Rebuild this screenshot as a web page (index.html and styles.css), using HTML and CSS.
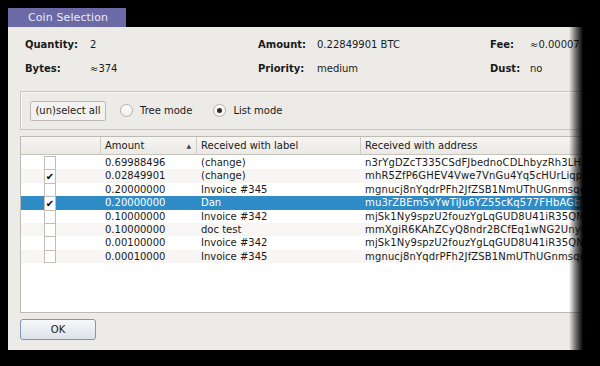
FILE: index.html
```html
<!DOCTYPE html>
<html>
<head>
<meta charset="utf-8">
<link rel="stylesheet" href="styles.css">
</head>
<body>
<div class="screen">
  <div class="tab">Coin Selection</div>
  <div class="dialog">
    <div class="info">
      <div class="info-col c1">
        <div class="row"><span class="lbl">Quantity:</span><span class="val">2</span></div>
        <div class="row"><span class="lbl">Bytes:</span><span class="val">≈374</span></div>
      </div>
      <div class="info-col c2">
        <div class="row"><span class="lbl">Amount:</span><span class="val">0.22849901 BTC</span></div>
        <div class="row"><span class="lbl">Priority:</span><span class="val">medium</span></div>
      </div>
      <div class="info-col c3">
        <div class="row"><span class="lbl">Fee:</span><span class="val">≈0.00007</span></div>
        <div class="row"><span class="lbl">Dust:</span><span class="val">no</span></div>
      </div>
    </div>
    <div class="group">
      <button class="btn-flat">(un)select all</button>
      <label class="radio"><span class="circle"></span>Tree mode</label>
      <label class="radio"><span class="circle on"><span class="dot"></span></span>List mode</label>
    </div>
    <div class="table">
      <div class="thead">
        <div class="th c-check"></div>
        <div class="th c-amount">Amount<span class="arrow">▲</span></div>
        <div class="th c-label">Received with label</div>
        <div class="th c-addr">Received with address</div>
      </div>
      <div class="tbody">
        <div class="tr"><div class="td c-check"><span class="cb"></span></div><div class="td c-amount">0.69988496</div><div class="td c-label">(change)</div><div class="td c-addr">n3rYgDZcT335CSdFJbednoCDLhbyzRh3LHx</div></div>
        <div class="tr alt"><div class="td c-check"><span class="cb">✔</span></div><div class="td c-amount">0.02849901</div><div class="td c-label">(change)</div><div class="td c-addr">mhR5ZfP6GHEV4Vwe7VnGu4Yq5cHUrLiqpQ</div></div>
        <div class="tr"><div class="td c-check"><span class="cb"></span></div><div class="td c-amount">0.20000000</div><div class="td c-label">Invoice #345</div><div class="td c-addr">mgnucj8nYqdrPFh2JfZSB1NmUThUGnmsqe</div></div>
        <div class="tr sel"><div class="td c-check"><span class="cb">✔</span></div><div class="td c-amount">0.20000000</div><div class="td c-label">Dan</div><div class="td c-addr">mu3rZBEm5vYwTiJu6YZ55cKq577FHbAGbz</div></div>
        <div class="tr"><div class="td c-check"><span class="cb"></span></div><div class="td c-amount">0.10000000</div><div class="td c-label">Invoice #342</div><div class="td c-addr">mjSk1Ny9spzU2fouzYgLqGUD8U41iR35QN</div></div>
        <div class="tr alt"><div class="td c-check"><span class="cb"></span></div><div class="td c-amount">0.10000000</div><div class="td c-label">doc test</div><div class="td c-addr">mmXgiR6KAhZCyQ8ndr2BCfEq1wNG2UnyG6</div></div>
        <div class="tr"><div class="td c-check"><span class="cb"></span></div><div class="td c-amount">0.00100000</div><div class="td c-label">Invoice #342</div><div class="td c-addr">mjSk1Ny9spzU2fouzYgLqGUD8U41iR35QN</div></div>
        <div class="tr alt"><div class="td c-check"><span class="cb"></span></div><div class="td c-amount">0.00010000</div><div class="td c-label">Invoice #345</div><div class="td c-addr">mgnucj8nYqdrPFh2JfZSB1NmUThUGnmsqe</div></div>
      </div>
    </div>
    <div class="footer">
      <button class="btn-ok">OK</button>
    </div>
  </div>
  <div class="shadow"></div>
</div>
</body>
</html>
```
FILE: styles.css
```css
* { box-sizing: border-box; }
html, body {
  margin: 0;
  padding: 0;
  background: #000;
}
body {
  width: 600px;
  height: 366px;
  overflow: hidden;
  font-family: "DejaVu Sans", "Liberation Sans", sans-serif;
  font-size: 10px;
  color: #1a1a1a;
}
.screen {
  position: relative;
  width: 600px;
  height: 366px;
  padding: 8px 0 0 8px;
}
.tab {
  width: 118px;
  height: 19px;
  background: #6b6aa6;
  color: #eceaf6;
  font-size: 11px;
  line-height: 19px;
  padding-left: 20px;
  letter-spacing: 0.1px;
}
.dialog {
  width: 620px;
  height: 323px;
  background: #edebe7;
  padding: 0 0 0 12px;
  display: flex;
  flex-direction: column;
}
.info {
  display: flex;
  height: 58px;
  padding-top: 11px;
}
.info-col .row {
  height: 24px;
  line-height: 14px;
  display: flex;
}
.info .lbl { font-weight: bold; }
.c1 { width: 238px; padding-left: 5px; }
.c1 .lbl { width: 65px; }
.c2 { width: 232px; }
.c2 .lbl { width: 59px; }
.c3 .lbl { width: 40px; }
.group {
  height: 39px;
  margin-top: 6px;
  border: 1px solid #c9c6c0;
  border-right: none;
  display: flex;
  align-items: center;
  padding-left: 9px;
  box-shadow: inset 1px 1px 0 #f8f7f5;
}
.btn-flat {
  font-family: inherit;
  font-size: 10px;
  height: 20px;
  width: 76px;
  padding: 0;
  color: #1a1a1a;
  background: #f3f2f0;
  border: 1px solid #bcb9b3;
  border-radius: 2px;
  margin-right: 14px;
}
.radio {
  display: flex;
  align-items: center;
  margin-right: 21px;
}
.circle {
  width: 13px;
  height: 13px;
  border-radius: 50%;
  border: 1px solid #b3b0aa;
  background: linear-gradient(#ffffff, #f1f0ee);
  margin-right: 7px;
  display: flex;
  align-items: center;
  justify-content: center;
}
.dot {
  width: 5px;
  height: 5px;
  border-radius: 50%;
  background: #2e2e2e;
}
.table {
  margin-top: 6px;
  height: 177px;
  background: #fff;
  border: 1px solid #bdbab4;
  border-right: none;
}
.thead {
  display: flex;
  height: 18px;
  background: linear-gradient(#f6f5f3, #ebe9e5);
  border-bottom: 1px solid #c6c3bd;
}
.th {
  line-height: 17px;
  padding-left: 4px;
  border-right: 1px solid #cfccc6;
  position: relative;
  color: #1a1a1a;
}
.c-check { width: 80px; flex: none; }
.c-amount { width: 96px; flex: none; }
.c-label { width: 164px; flex: none; }
.c-addr { flex: 1; white-space: nowrap; overflow: hidden; }
.td.c-addr { letter-spacing: 0.15px; }
.arrow {
  position: absolute;
  right: 5px;
  top: 0;
  font-size: 6px;
  color: #444;
}
.tbody { padding-top: 1px; }
.tr {
  display: flex;
  height: 13.4px;
  line-height: 13.4px;
  background: #fff;
}
.tr.alt { background: #f7f6f5; }
.tr.sel { background: #308cc6; color: #fff; }
.td { padding-left: 4px; white-space: nowrap; overflow: hidden; }
.td.c-check { padding-left: 23px; }
.cb {
  display: block;
  width: 12px;
  height: 13.4px;
  border: 1px solid #c0bdb8;
  border-bottom: none;
  background: #fff;
  color: #000;
  font-size: 10px;
  font-weight: bold;
  line-height: 13px;
  text-align: center;
}
.tr:last-child .cb { border-bottom: 1px solid #c0bdb8; }
.footer {
  padding-top: 6px;
}
.btn-ok {
  font-family: inherit;
  font-size: 10px;
  width: 76px;
  height: 21px;
  padding: 0;
  color: #1a1a1a;
  border: 1px solid #7f98b2;
  border-radius: 3px;
  background: linear-gradient(#f6f8fa, #dde3ea);
}
.shadow {
  position: absolute;
  left: 569px;
  top: 0;
  width: 31px;
  height: 366px;
  background: linear-gradient(to right, rgba(0,0,0,0) 0px, rgba(0,0,0,0.55) 7px, #000 14px);
}
```
